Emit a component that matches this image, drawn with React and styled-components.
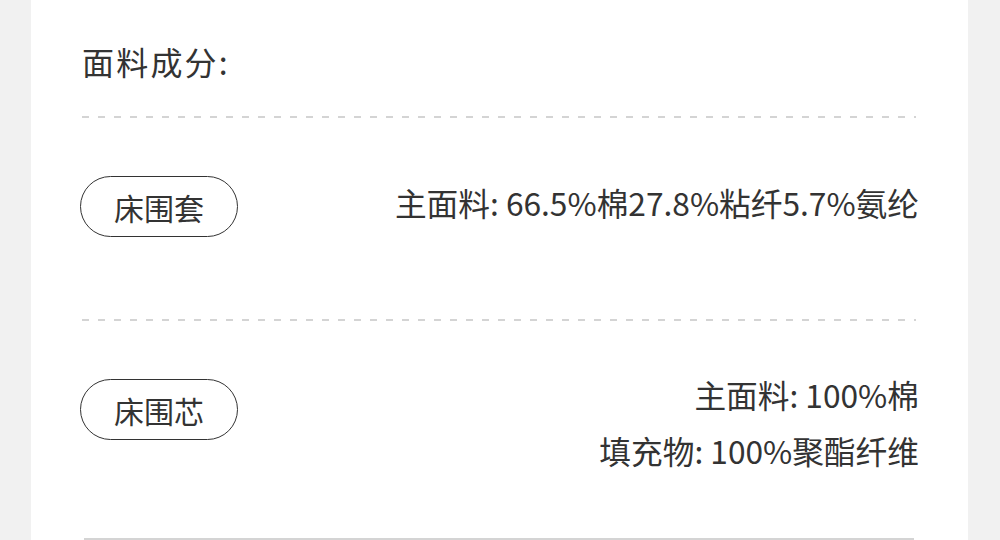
import React from 'react';
import styled, { createGlobalStyle } from 'styled-components';

const GlobalStyle = createGlobalStyle`
  html, body {
    margin: 0;
    padding: 0;
    background: #f1f1f1;
  }
  body {
    font-family: "Noto Sans CJK SC", "Noto Sans", sans-serif;
    color: #333;
  }
`;

const Page = styled.div`
  width: 1000px;
  height: 540px;
  overflow: hidden;
  background: #f1f1f1;
`;

const Card = styled.div`
  margin: 0 32px 0 31px;
  background: #fff;
  padding: 39px 49px 0 51px;
  height: 540px;
  box-sizing: border-box;
`;

const Title = styled.h2`
  margin: 0;
  font-size: 32px;
  font-weight: 400;
  line-height: 44px;
  letter-spacing: 2.2px;
  color: #333;
`;

const Dashed = styled.div`
  height: 2px;
  margin-top: ${p => p.top || 0}px;
  margin-right: 3px;
  background-image: repeating-linear-gradient(
    to right,
    #d4d4d4 0,
    #d4d4d4 7px,
    transparent 7px,
    transparent 16px
  );
`;

const Solid = styled.div`
  height: 2px;
  margin: 0 5px 0 2px;
  background: #d4d4d4;
`;

const Row = styled.div`
  display: flex;
  justify-content: space-between;
  align-items: flex-start;
  height: ${p => p.height}px;
  padding-top: 58px;
  box-sizing: border-box;
`;

const Tag = styled.div`
  margin-left: -2px;
  width: 158px;
  height: 61px;
  box-sizing: border-box;
  border: 1px solid #333;
  border-radius: 31px;
  display: flex;
  align-items: center;
  justify-content: center;
  font-size: 30px;
  line-height: 1;
  color: #333;
`;

const Values = styled.div`
  margin-top: ${p => p.offset}px;
  text-align: right;
`;

const Line = styled.div`
  font-size: 31.7px;
  line-height: 56px;
  color: #333;
  white-space: nowrap;
`;

const rows = [
  { tag: '床围套', height: 201, offset: -2, lines: ['主面料: 66.5%棉27.8%粘纤5.7%氨纶'] },
  { tag: '床围芯', height: 217, offset: -13, lines: ['主面料: 100%棉', '填充物: 100%聚酯纤维'] },
];

export default function App() {
  return (
    <Page>
      <GlobalStyle />
      <Card>
        <Title>面料成分:</Title>
        <Dashed top={33} />
        {rows.map((r, i) => (
          <React.Fragment key={r.tag}>
            {i > 0 && <Dashed />}
            <Row height={r.height}>
              <Tag>{r.tag}</Tag>
              <Values offset={r.offset}>
                {r.lines.map(l => (
                  <Line key={l}>{l}</Line>
                ))}
              </Values>
            </Row>
          </React.Fragment>
        ))}
        <Solid />
      </Card>
    </Page>
  );
}
